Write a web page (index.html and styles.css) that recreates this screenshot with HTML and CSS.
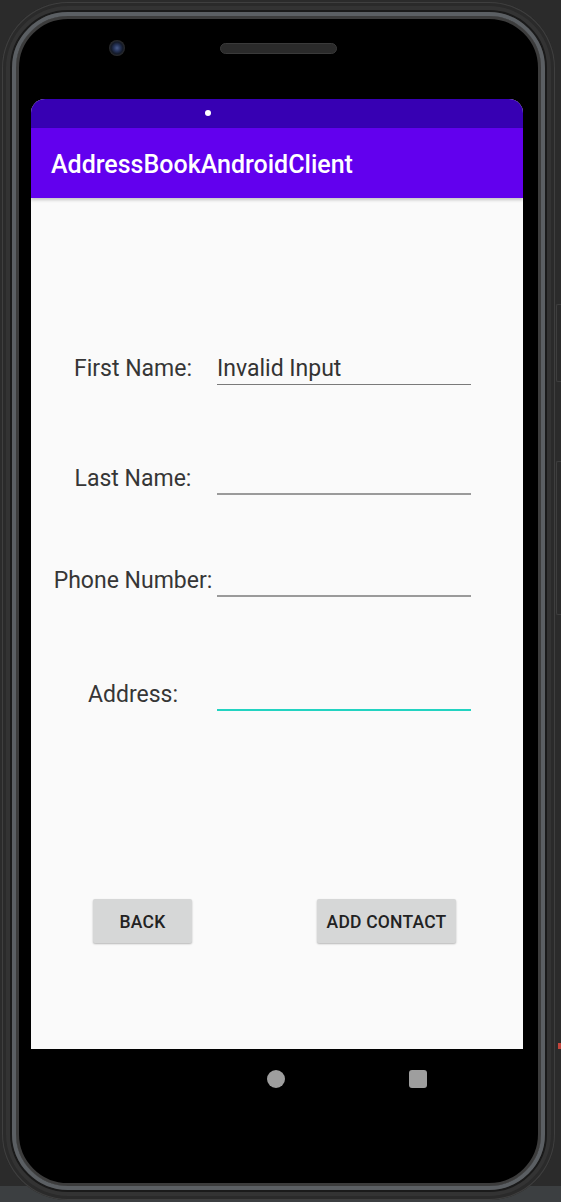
FILE: index.html
```html
<!DOCTYPE html>
<html lang="en">
<head>
<meta charset="utf-8">
<title>AddressBookAndroidClient</title>
<link rel="stylesheet" href="styles.css">
</head>
<body>
<div class="stage">
  <div class="phone">
    <div class="ring">
      <div class="ring-inner">
        <div class="bezel">
          <div class="top">
            <span class="camera"></span>
            <span class="speaker"></span>
          </div>
          <div class="screen">
            <div class="status"><span class="dot"></span></div>
            <div class="toolbar">AddressBookAndroidClient</div>
            <div class="content">
              <div class="row">
                <div class="label">First Name:</div>
                <div class="field field-dark">Invalid Input</div>
              </div>
              <div class="row row-2">
                <div class="label">Last Name:</div>
                <div class="field"></div>
              </div>
              <div class="row row-3">
                <div class="label">Phone Number:</div>
                <div class="field"></div>
              </div>
              <div class="row row-4">
                <div class="label">Address:</div>
                <div class="field field-focus"></div>
              </div>
              <div class="actions">
                <div class="btn btn-back">BACK</div>
                <div class="btn btn-add">ADD CONTACT</div>
              </div>
            </div>
          </div>
          <div class="nav">
            <span class="home"></span>
            <span class="recent"></span>
          </div>
        </div>
      </div>
    </div>
  </div>
  <div class="side">
    <span class="side-btn side-btn-1"></span>
    <span class="side-btn side-btn-2"></span>
    <span class="side-mark"></span>
  </div>
</div>
</body>
</html>
```
FILE: styles.css
```css
* { box-sizing: border-box; }
html, body {
  margin: 0;
  padding: 0;
}
body {
  width: 561px;
  height: 1202px;
  overflow: hidden;
  background: linear-gradient(#2b2b2b 0, #2b2b2b 1186px, #3c3f41 1186px);
  font-family: Roboto, "Liberation Sans", sans-serif;
}
.stage {
  display: flex;
  padding: 2px 0 0 2px;
}
.phone {
  width: 553px;
  height: 1198px;
  border-radius: 66px;
  background: #333;
  padding: 8px;
  box-shadow: inset 0 0 0 1px #3f3f3f, inset 0 0 0 4px #2a2a2a;
}
.ring {
  height: 100%;
  border-radius: 58px;
  border: 2px solid #1a1a1a;
}
.ring-inner {
  height: 100%;
  border-radius: 56px;
  border: 4px solid #5b5f63;
  box-shadow: inset 0 0 0 1px #6d7176;
}
.bezel {
  height: 100%;
  border-radius: 52px;
  border: 3px solid #3c3c3c;
  background: #000;
  overflow: hidden;
}
.top {
  height: 80px;
  display: flex;
  align-items: flex-start;
  padding-left: 90px;
}
.camera {
  width: 16px;
  height: 16px;
  margin-top: 21px;
  border-radius: 50%;
  background: radial-gradient(circle, #4a5c8a 0, #26345a 28%, #141a28 52%, #2e2e2e 72%, #1c1c1c 100%);
}
.speaker {
  width: 117px;
  height: 11px;
  margin-top: 24px;
  margin-left: 95px;
  border-radius: 6px;
  background: #2a2a2a;
  border: 1px solid #3a3a3a;
}
.screen {
  margin-left: 12px;
  width: 492px;
  height: 950px;
  border-radius: 14px 14px 0 0;
  overflow: hidden;
  background: #fafafa;
}
.status {
  height: 29px;
  background: #3700b3;
  padding: 11px 0 0 174px;
}
.dot {
  display: block;
  width: 6px;
  height: 6px;
  border-radius: 50%;
  background: #fff;
}
.toolbar {
  position: relative;
  height: 70px;
  background: #6200ee;
  color: #fff;
  font-weight: 500;
  font-size: 25px;
  line-height: 66px;
  padding: 4px 0 0 20px;
  box-shadow: 0 2px 3px rgba(0, 0, 0, 0.22);
}
.content {
  height: 851px;
  padding-top: 159px;
}
.row {
  display: grid;
  grid-template-columns: 164px 254px;
  column-gap: 2px;
  margin-left: 20px;
}
.row-2 { margin-top: 82px; }
.row-3 { margin-top: 74px; }
.row-4 { margin-top: 86px; }
.label, .field {
  height: 28px;
  font-size: 23px;
  line-height: 24px;
  color: #363636;
  white-space: nowrap;
}
.label {
  display: flex;
  justify-content: center;
}
.field {
  border-bottom: 2px solid #9a9a9a;
}
.field-dark {
  border-bottom: 1px solid #7a7a7a;
  color: #333;
}
.field-focus {
  border-bottom: 2px solid #22d3c1;
}
.actions {
  display: flex;
  justify-content: space-between;
  margin-top: 188px;
  padding: 0 67px 0 62px;
}
.btn {
  height: 44px;
  border-radius: 2px;
  background: #d6d7d7;
  box-shadow: 0 1px 2px rgba(0, 0, 0, 0.28);
  color: #222;
  font-weight: 500;
  font-size: 17.5px;
  letter-spacing: 0.2px;
  line-height: 46px;
  text-align: center;
}
.btn-back { width: 99px; }
.btn-add { width: 139px; }
.nav {
  display: flex;
  padding: 21px 0 0 248px;
}
.home {
  width: 18px;
  height: 18px;
  border-radius: 50%;
  background: #9e9e9e;
}
.recent {
  width: 18px;
  height: 18px;
  margin-left: 124px;
  border-radius: 3px;
  background: #9e9e9e;
}
.side {
  width: 6px;
  display: flex;
  flex-direction: column;
  align-items: flex-end;
}
.side-btn {
  width: 5px;
  background: #2a2a2a;
  border: 1px solid #3e3e3e;
  border-right: none;
  border-radius: 2px 0 0 2px;
}
.side-btn-1 { height: 78px; margin-top: 302px; }
.side-btn-2 { height: 154px; margin-top: 79px; }
.side-mark {
  width: 3px;
  height: 6px;
  margin-top: 428px;
  background: #c2453c;
}
```
